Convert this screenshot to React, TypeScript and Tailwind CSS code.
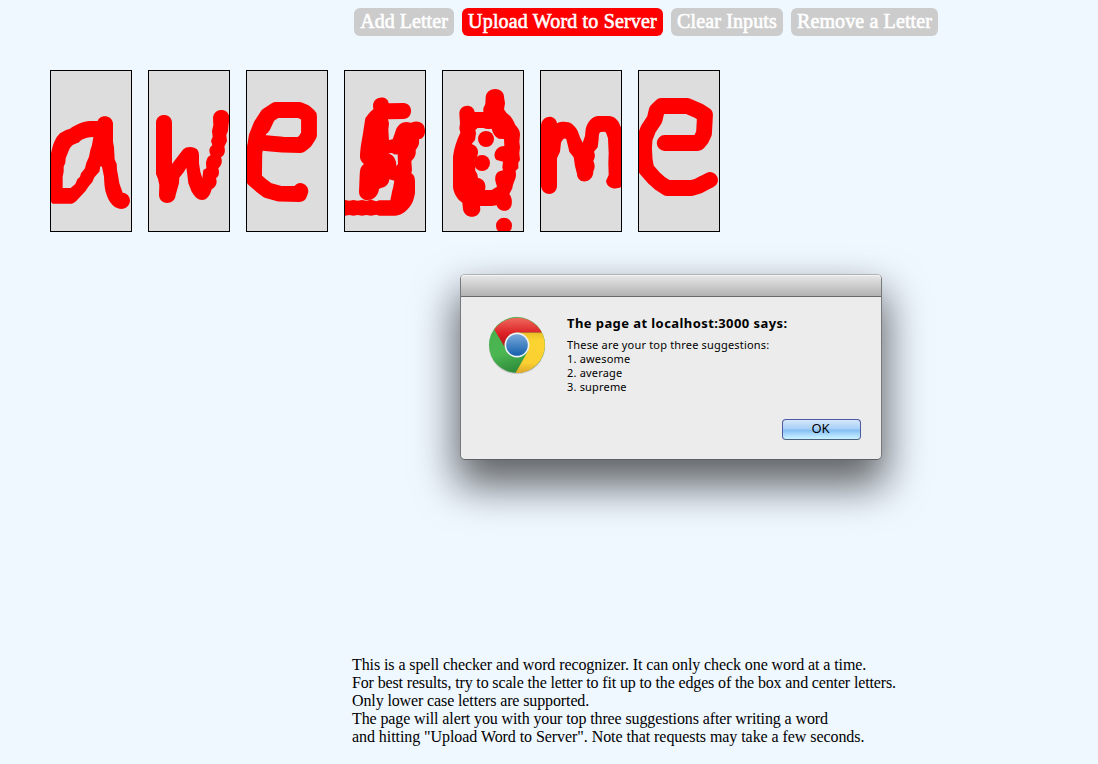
import React from "react";

type Letter = { id: string; originX: number; strokes?: string[]; blob?: string; dots?: [number, number][] };

// Ink is stored at three units per pixel; each pad is 80x160 px.
const letters: Letter[] = [
  {
    id: "a",
    originX: 33,
    blob:
      "M33 280C40 250 45 235 60 220L78 210L90 206C105 195 130 184 150 183L173 183C178 163 216 162 219 190L219 245L222 262L224 298L230 312L231 330L234 345L238 370L248 398C278 402 277 442 246 447C225 447 210 430 202 410C193 390 193 370 192 350L186 320L181 319L178 335L163 352L157 366L145 380L136 394L108 424Q100 431 95 431L38 431L33 426Z" +
      "M68 384L92 384L106 372L112 358L120 350L123 340L135 325L139 308L147 290L151 270L156 255L160 231C145 231 135 235 125 239L115 248C100 252 92 258 88 268L77 295L76 308L71 320L71 335L68 350Z",
  },
  {
    id: "w",
    originX: 327,
    blob:
      "M348 189C348 157 396 157 396 189V312L405 300L430 268Q437 261 450 261C470 261 477 272 477 285V310L481 335L487 355L490 330L499 325L498 308C500 295 505 288 512 286C505 272 508 262 517 256L513 243L518 230L516 213L520 195L519 174C521 142 568 142 568 174L565 200L564 213L559 225L561 243L553 260C557 275 554 285 543 292C548 305 545 315 535 325C540 340 535 350 528 355C533 370 528 380 515 388C510 408 500 420 487 420C470 420 462 405 455 395L445 370L442 345L439 323L432 335L418 353L417 370L407 405C405 437 358 437 357 405L358 375L354 357L348 342Z",
  },
  {
    id: "e1",
    originX: 33,
    strokes: [
      "M62 250L75 248L105 251L140 254L193 255L207 244L219 225L219 168L206 157L190 150L120 150L95 166L76 195L62 230L55 275L54 358L75 376L95 391L130 401L190 402L193 393",
      "M95 168L80 200M54 280L62 240",
    ],
  },
  {
    id: "s",
    originX: 327,
    blob:
      "M411 138C411 107 456 105 458 130L502 129C533 129 533 177 502 177L456 178L459 190L457 210L459 240L470 238L478 215C484 195 497 186 512 186L525 188C550 179 567 190 567 213C567 228 560 236 549 238C551 255 545 262 539 270C541 285 535 295 526 303L528 330L526 340C535 345 537 355 537 365L537 400C533 420 530 430 520 442C505 460 490 468 475 467L430 467L421 464L405 467L391 465L378 467L365 465L352 467L340 465L327 467V420L340 422L352 420L365 422L378 420L391 422L405 419L421 424L430 421L463 421C468 400 468 392 471 385L475 362L460 358C459 372 450 382 435 384L429 387C427 405 415 420 395 420C378 420 369 408 369 395L371 345C372 330 373 320 384 312C374 305 371 295 372 285C374 255 378 240 381 220L388 175C395 165 400 158 412 148Z" +
      "M457 280L468 279Q475 285 485 283L486 312L481 318Q481 290 462 282Z",
  },
  {
    id: "o",
    originX: 39,
    blob:
      "M88 162C88 131 130 130 134 156L160 156L160 145L166 132L167 112C170 78 222 80 222 111L225 130L222 148L229 158C245 170 250 180 256 195C268 208 270 215 270 225L268 245L270 262L268 280L270 300L265 308L265 325L257 332L258 345C257 360 250 365 247 385L238 402C246 412 247 425 244 438C235 460 205 455 200 436L185 438L150 438L151 448C148 478 104 478 99 448L97 428C78 415 70 395 69 380L69 290C72 265 80 240 91 218L88 205L90 190Z" +
      "M143 204L160 204Q170 209 185 206Q190 228 206 236L222 237L223 258C195 258 186 290 200 300L219 305L217 322L219 331C200 334 194 345 196 362L201 380L185 390L165 390C170 370 160 356 144 354Q143 340 136 332L134 300Q145 290 144 273Q142 258 125 252L135 240L138 220L136 210Z",
    dots: [
      [168, 237],
      [156, 309],
      [222, 497],
    ],
  },
  {
    id: "m",
    originX: 33,
    blob:
      "M33 195C38 163 77 163 81 190C95 183 115 185 125 191C140 202 145 215 150 232L158 248L165 228L167 208C172 185 188 168 205 168L238 168C260 170 268 188 274 205L275 380C260 390 232 388 228 363L236 345L235 310L236 280L234 235C231 225 228 215 224 215L212 216C205 220 207 230 206 238L203 262L192 275Q198 290 190 303Q198 320 190 334C190 372 142 374 141 342L135 318L131 292L118 275L114 258L109 238C103 232 98 238 93 248L90 275L81 295V378C80 410 36 410 33 378Z",
  },
  {
    id: "e2",
    originX: 327,
    strokes: [
      "M404 249L504 249L514 237L522 220L525 165L505 152L472 138L394 138L380 152L374 178L355 207L344 235L342 265L344 300L349 328L370 352L390 370L412 384L485 384L505 378L522 369L540 360",
    ],
  },
];

function LetterPad({ letter }: { letter: Letter }) {
  return (
    <div className="h-[162px] w-[82px] border border-black bg-[#dddddd]">
      <svg className="block h-[160px] w-[80px]" viewBox={`${letter.originX} 33 240 480`} fill="#ff0000">
        {letter.blob && <path d={letter.blob} fillRule="evenodd" />}
        {letter.dots?.map(([x, y]) => (
          <circle key={`${x}-${y}`} cx={x} cy={y} r="24" />
        ))}
        {letter.strokes?.map((d) => (
          <path
            key={d}
            d={d}
            fill="none"
            stroke="#ff0000"
            strokeWidth="47.5"
            strokeLinecap="round"
            strokeLinejoin="round"
          />
        ))}
      </svg>
    </div>
  );
}

function ToolButton({ label, size, active }: { label: string; size: string; active?: boolean }) {
  return (
    <button
      className={`${size} h-7 whitespace-nowrap rounded-[6px] pb-[2px] text-center text-[20px] leading-[26px] text-white [-webkit-text-stroke:0.6px_white] ${
        active ? "bg-[#ff0000]" : "bg-[#cccccc]"
      }`}
    >
      {label}
    </button>
  );
}

function ChromeLogo() {
  return (
    <svg className="h-[60px] w-[60px]" viewBox="0 0 60 60">
      <defs>
        <linearGradient id="red" x1="0" y1="0" x2="0" y2="1">
          <stop offset="0" stopColor="#ef6a5c" />
          <stop offset="0.55" stopColor="#dc1f25" />
          <stop offset="1" stopColor="#b90f18" />
        </linearGradient>
        <linearGradient id="yellow" x1="0" y1="0" x2="0" y2="1">
          <stop offset="0" stopColor="#e9bd25" />
          <stop offset="0.2" stopColor="#fbd432" />
          <stop offset="0.75" stopColor="#fbd030" />
          <stop offset="1" stopColor="#dea72b" />
        </linearGradient>
        <linearGradient id="green" x1="0" y1="0" x2="0.3" y2="1">
          <stop offset="0" stopColor="#45ad4b" />
          <stop offset="0.65" stopColor="#4cb752" />
          <stop offset="1" stopColor="#2f8d3c" />
        </linearGradient>
        <linearGradient id="blue" x1="0" y1="0" x2="0" y2="1">
          <stop offset="0" stopColor="#78a9db" />
          <stop offset="1" stopColor="#155fac" />
        </linearGradient>
      </defs>
      <circle cx="30" cy="31" r="28.2" fill="#000" opacity="0.14" />
      <circle cx="30" cy="30" r="28" fill="url(#green)" />
      <path d="M30 17.5H54.9A28 28 0 0 1 28.5 58L41 36Z" fill="url(#yellow)" />
      <path d="M7.3 14.6A28 28 0 0 1 54.9 17.5H30C21 18 17 25 17.6 32Z" fill="url(#red)" />
      <circle cx="30" cy="30" r="12.4" fill="#f1f3f5" />
      <circle cx="30" cy="30" r="10.8" fill="url(#blue)" />
    </svg>
  );
}

function AlertDialog() {
  return (
    <div
      role="alertdialog"
      className="absolute left-[460px] top-[274px] flex h-[186px] w-[422px] flex-col rounded-[5px] border border-[#777a7d] border-b-[#5d6064] border-t-[#b0b3b6] bg-[#ececec] font-['Noto_Sans','Open_Sans',sans-serif] shadow-[0_22px_42px_4px_rgba(0,0,0,0.6)]"
    >
      <div className="h-[22px] shrink-0 rounded-t-[4px] border-b border-[#6a6a6a] bg-linear-to-b from-[#e8e8e8] to-[#b3b3b3] shadow-[inset_0_1px_0_#f3f3f3]" />
      <div className="flex pl-[26px] pt-[18px]">
        <ChromeLogo />
        <div className="ml-5 whitespace-nowrap text-[11px] leading-[14px] tracking-[0.18px] text-black">
          <h1 className="mb-[7px] text-[13px] font-bold leading-4 tracking-[0.42px]">
            The page at localhost:3000 says:
          </h1>
          <p>These are your top three suggestions:</p>
          <p>1. awesome</p>
          <p>2. average</p>
          <p>3. supreme</p>
        </div>
      </div>
      <button className="mb-[19px] mr-5 mt-auto h-[21px] w-[79px] self-end rounded-[4px] border border-[#5158a0] border-b-[#4d6280] bg-[linear-gradient(#d5e8fb_0%,#a6cff7_48%,#83bdf5_52%,#bfeaff_90%,#c9f3ff_100%)] pb-[2px] pr-[2px] text-center text-[13px] leading-[17px] text-black">
        OK
      </button>
    </div>
  );
}

export default function App() {
  return (
    <main className="relative flex h-[764px] w-full flex-col overflow-hidden bg-[#eff7ff] font-['Liberation_Serif',serif] text-black">
      <nav className="flex gap-2 pl-[354px] pt-2">
        <ToolButton label="Add Letter" size="w-[100px] tracking-[0.05px]" />
        <ToolButton label="Upload Word to Server" size="w-[201px] tracking-[0.17px]" active />
        <ToolButton label="Clear Inputs" size="w-[112px] tracking-[0.12px]" />
        <ToolButton label="Remove a Letter" size="w-[147px] tracking-[0.12px]" />
      </nav>
      <section className="mt-[34px] flex gap-4 pl-[50px]">
        {letters.map((letter) => (
          <LetterPad key={letter.id} letter={letter} />
        ))}
      </section>
      <section className="mt-auto whitespace-nowrap pb-[18px] pl-[352px] text-base leading-[18px]">
        <p className="tracking-[-0.09px]">
          This is a spell checker and word recognizer. It can only check one word at a time.
        </p>
        <p className="tracking-[-0.145px]">
          For best results, try to scale the letter to fit up to the edges of the box and center letters.
        </p>
        <p className="tracking-[-0.12px]">Only lower case letters are supported.</p>
        <p className="tracking-[-0.117px]">
          The page will alert you with your top three suggestions after writing a word
        </p>
        <p className="tracking-[-0.066px]">
          and hitting "Upload Word to Server". Note that requests may take a few seconds.
        </p>
      </section>
      <AlertDialog />
    </main>
  );
}
